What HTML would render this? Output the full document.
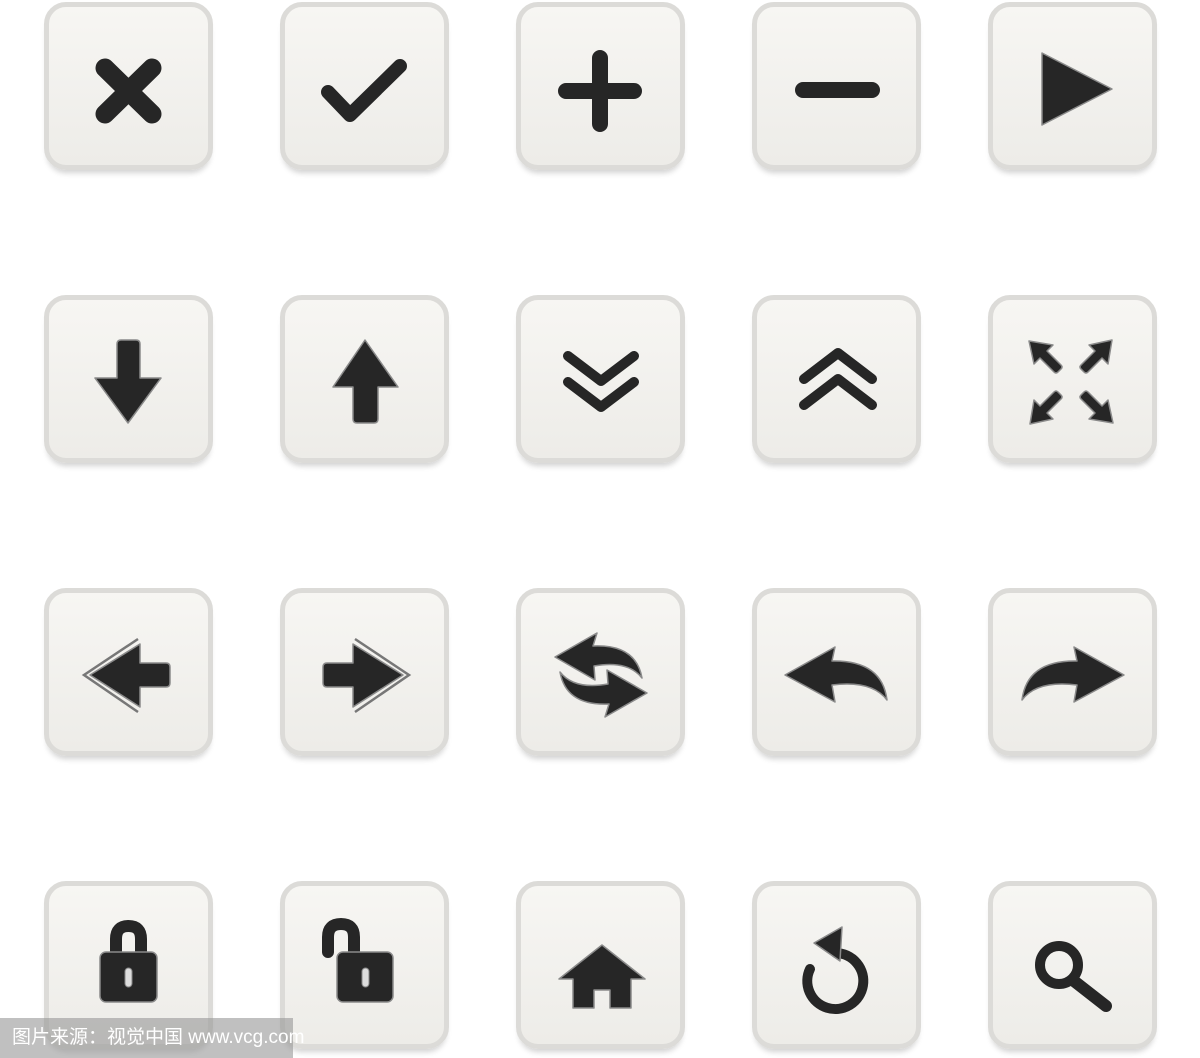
<!DOCTYPE html>
<html><head><meta charset="utf-8"><style>
body{margin:0;width:1200px;height:1058px;background:#fff;position:relative;overflow:hidden;font-family:"Liberation Sans","Noto Sans CJK SC",sans-serif}
.b{position:absolute;width:169px;height:168px;box-sizing:border-box;border:5px solid #dcdbd8;border-radius:22px;background:linear-gradient(#f7f6f3,#edece8);box-shadow:0 6px 6px -3px rgba(0,0,0,.18)}
.b svg{position:absolute;left:-5px;top:-5px;width:169px;height:168px}
.i{fill:#262626;stroke:#8a8a8a;stroke-width:1.5;stroke-linejoin:round}
.s{fill:none;stroke:#262626;stroke-linecap:round;stroke-linejoin:round}
.wm{position:absolute;left:0;top:1018px;width:293px;height:40px;background:rgba(150,150,150,.6);color:#fff;font-size:19px;line-height:40px;padding-left:12px;box-sizing:border-box;white-space:nowrap}
</style></head><body>
<!-- row 1 -->
<div class="b" style="left:44px;top:2px"><svg viewBox="0 0 169 168"><path class="s" d="M61 66L108 112M108 66L61 112" stroke-width="19"/></svg></div>
<div class="b" style="left:280px;top:2px"><svg viewBox="0 0 169 168"><path class="s" d="M48 90L70 113L120 64" stroke-width="14"/></svg></div>
<div class="b" style="left:516px;top:2px"><svg viewBox="0 0 169 168"><path class="s" d="M84 56V122M50 89H118" stroke-width="16"/></svg></div>
<div class="b" style="left:752px;top:2px"><svg viewBox="0 0 169 168"><path class="s" d="M51 88H120" stroke-width="16"/></svg></div>
<div class="b" style="left:988px;top:2px"><svg viewBox="0 0 169 168"><path class="i" d="M54 51L124 87L54 123Z" stroke-width="2"/></svg></div>
<!-- row 2 -->
<div class="b" style="left:44px;top:295px"><svg viewBox="0 0 169 168"><path class="i" d="M77 45H92Q96 45 96 49V83H117L84 128L51 83H73V49Q73 45 77 45Z"/></svg></div>
<div class="b" style="left:280px;top:295px"><svg viewBox="0 0 169 168"><path class="i" d="M77 128H94Q98 128 98 124V92H118L85 45L53 92H73V124Q73 128 77 128Z"/></svg></div>
<div class="b" style="left:516px;top:295px"><svg viewBox="0 0 169 168"><path class="s" d="M52 61L85 86L118 61M52 87L85 112L118 87" stroke-width="10"/></svg></div>
<div class="b" style="left:752px;top:295px"><svg viewBox="0 0 169 168"><path class="s" d="M52 84L86 58L120 84M52 110L86 84L120 110" stroke-width="10"/></svg></div>
<div class="b" style="left:988px;top:295px"><svg viewBox="0 0 169 168"><g class="i"><g id="ar"><path d="M41 46L65 50L59 56L73 70Q75 72 73 74L70 77Q68 79 66 77L52 63L46 69Z"/></g><use href="#ar" transform="rotate(90 83 87)"/><use href="#ar" transform="rotate(180 83 87)"/><use href="#ar" transform="rotate(270 83 87)"/></g></svg></div>
<!-- row 3 -->
<div class="b" style="left:44px;top:588px"><svg viewBox="0 0 169 168"><path d="M94 51L40 87L94 124" fill="none" stroke="#777" stroke-width="2.5"/><path class="i" d="M46 87L96 56V75H122Q126 75 126 79V95Q126 99 122 99H96V119Z"/></svg></div>
<div class="b" style="left:280px;top:588px"><svg viewBox="0 0 169 168"><g transform="matrix(-1 0 0 1 169 0)"><path d="M94 51L40 87L94 124" fill="none" stroke="#777" stroke-width="2.5"/><path class="i" d="M46 87L96 56V75H122Q126 75 126 79V95Q126 99 122 99H96V119Z"/></g></svg></div>
<div class="b" style="left:516px;top:588px"><svg viewBox="0 0 169 168"><g class="i"><path d="M39 69L81 45L77 58Q120 56 126 90Q112 72 78 78L79 92Z"/><path d="M39 69L81 45L77 58Q120 56 126 90Q112 72 78 78L79 92Z" transform="rotate(180 85 87)"/></g></svg></div>
<div class="b" style="left:752px;top:588px"><svg viewBox="0 0 169 168"><path class="i" d="M33 87L83 59L80 73Q130 72 135 112Q120 92 80 97L83 114Z"/></svg></div>
<div class="b" style="left:988px;top:588px"><svg viewBox="0 0 169 168"><path class="i" transform="matrix(-1 0 0 1 169 0)" d="M33 87L83 59L80 73Q130 72 135 112Q120 92 80 97L83 114Z"/></svg></div>
<!-- row 4 -->
<div class="b" style="left:44px;top:881px"><svg viewBox="0 0 169 168"><path class="s" d="M72 73V58Q72 45 84.5 45Q97 45 97 58V73" stroke-width="12" stroke-linecap="butt"/><rect class="i" x="56" y="71" width="57" height="50" rx="6"/><rect x="81" y="87" width="7" height="19" rx="3.5" fill="#ddd" stroke="#888"/></svg></div>
<div class="b" style="left:280px;top:881px"><svg viewBox="0 0 169 168"><path class="s" d="M48 71V56Q48 43 61 43Q74 43 74 56V73" stroke-width="12" stroke-linecap="butt"/><rect class="i" x="57" y="71" width="56" height="50" rx="6"/><rect x="82" y="87" width="7" height="19" rx="3.5" fill="#ddd" stroke="#888"/></svg></div>
<div class="b" style="left:516px;top:881px"><svg viewBox="0 0 169 168"><path class="i" d="M86 64L129 98H115V127H94V109H78V127H57V98H43Z"/></svg></div>
<div class="b" style="left:752px;top:881px"><svg viewBox="0 0 169 168"><path class="s" d="M84 72A28 28 0 1 1 58 88" stroke-width="10"/><path class="i" d="M62 62L90 46L88 80Z"/></svg></div>
<div class="b" style="left:988px;top:881px"><svg viewBox="0 0 169 168"><circle cx="71" cy="84" r="19" fill="none" stroke="#262626" stroke-width="10"/><path class="s" d="M86 100L118 125" stroke-width="12"/></svg></div>
<div class="wm">图片来源：视觉中国 www.vcg.com</div>
</body></html>
